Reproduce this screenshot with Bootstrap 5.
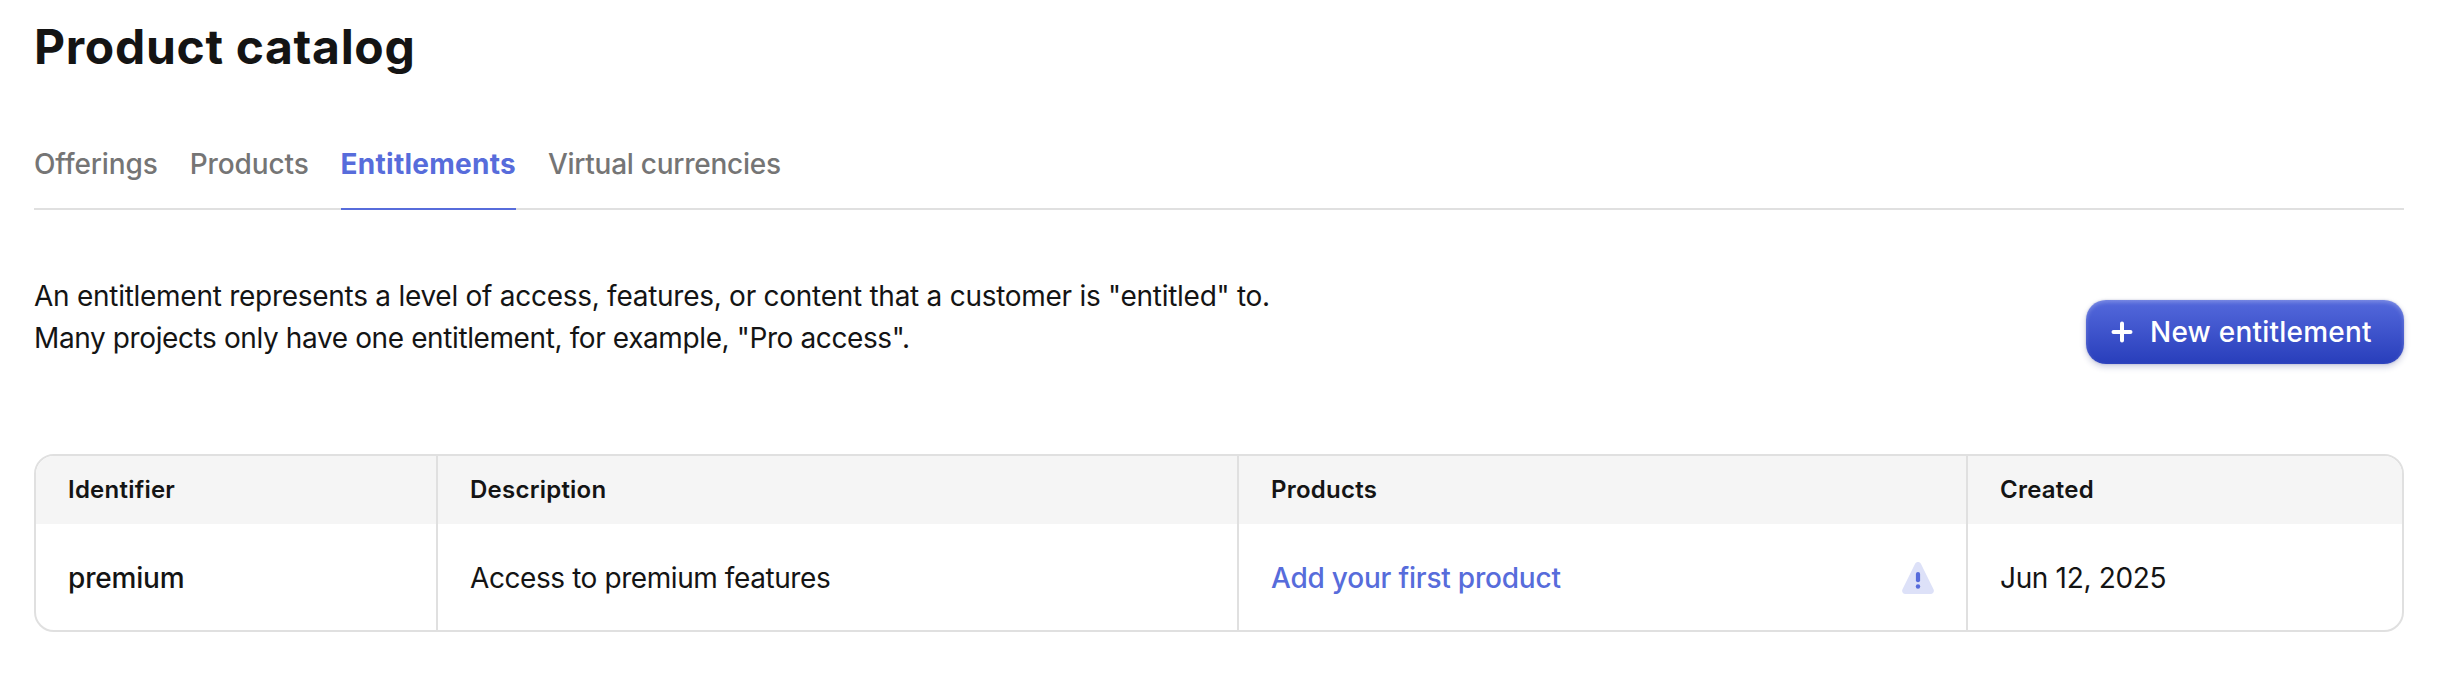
<!DOCTYPE html>
<html lang="en">
<head>
<meta charset="utf-8">
<meta name="viewport" content="width=device-width, initial-scale=1">
<title>Product catalog</title>
<link href="https://cdn.jsdelivr.net/npm/bootstrap@5.3.0/dist/css/bootstrap.min.css" rel="stylesheet">
<style>
  :root { --ink: #141414; --accent: #576cdb; --line: #e0e0e0; }
  body { font-family: Inter, "Liberation Sans", sans-serif; font-size: 28px; line-height: 42px; color: var(--ink); background: #fff; }
  .page { padding: 15px 44px 0 34px; }
  .page-title { font-size: 48px; line-height: 64px; font-weight: 700; letter-spacing: .68px; }
  .tabs { margin-top: 64px; gap: 32px; box-shadow: inset 0 -2px var(--line); }
  .tabs .nav-link { padding: 0 0 23px; line-height: 42px; color: #757575; font-weight: 500; letter-spacing: -.12px; border-bottom: 2px solid transparent; }
  .tabs .nav-link:last-child { letter-spacing: -.26px; }
  .tabs .nav-link.active { color: var(--accent); font-weight: 700; letter-spacing: .25px; border-color: var(--accent); }
  .intro { margin-top: 65px; }
  .intro p { letter-spacing: -.27px; }
  .intro .second { letter-spacing: -.39px; }
  .btn-new { margin-top: 25px; width: 318px; height: 64px; border: 0; border-radius: 20px; padding: 0 0 0 24px; gap: 16px; font-size: 28px; font-weight: 500; letter-spacing: .22px; color: #fff;
    background: linear-gradient(#5469dc, #283ebb);
    box-shadow: inset 0 2px 4px rgba(255,255,255,.25), 0 3px 6px rgba(30,40,120,.22), 0 0 2px rgba(30,40,120,.25); }
  .btn-new:hover { color: #fff; }
  .grid-frame { margin-top: 90px; border: 2px solid var(--line); border-radius: 20px; }
  .grid { table-layout: fixed; border-collapse: separate; border-spacing: 0; color: var(--ink); }
  .grid > :not(caption) > * > * { padding: 0 32px; border: 0; border-right: 2px solid var(--line); box-shadow: none; vertical-align: middle; color: var(--ink); }
  .grid > :not(caption) > * > :last-child { border-right: 0; }
  .grid th { height: 68px; font-size: 24px; font-weight: 600; line-height: 36px; letter-spacing: .24px; background: #f5f5f5; }
  .grid td { height: 106px; padding-top: 2px !important; letter-spacing: -.42px; }
  .grid td:last-child { letter-spacing: -.34px; }
  .grid td.ident { font-weight: 500; letter-spacing: -.18px; }
  .c1 { width: 402px; } .c2 { width: 801px; } .c3 { width: 729px; }
  .add-link { color: var(--accent); font-weight: 500; letter-spacing: -.21px; }
</style>
</head>
<body>
<main class="page">
  <h1 class="page-title mb-0">Product catalog</h1>

  <nav class="tabs nav">
    <a class="nav-link" href="#">Offerings</a>
    <a class="nav-link" href="#">Products</a>
    <a class="nav-link active" aria-current="page" href="#">Entitlements</a>
    <a class="nav-link" href="#">Virtual currencies</a>
  </nav>

  <section class="intro d-flex justify-content-between align-items-start">
    <p class="mb-0">An entitlement represents a level of access, features, or content that a customer is "entitled" to.<br><span class="second">Many projects only have one entitlement, for example, "Pro access".</span></p>
    <button type="button" class="btn btn-new d-flex align-items-center text-nowrap">
      <svg width="24" height="24" viewBox="0 0 24 24" fill="none" stroke="#fff" stroke-width="4" stroke-linecap="round" aria-hidden="true"><path d="M12 3.500v17M3.500 12h17"/></svg>
      <span>New entitlement</span>
    </button>
  </section>

  <div class="grid-frame overflow-hidden">
    <table class="table grid mb-0">
      <colgroup><col class="c1"><col class="c2"><col class="c3"><col></colgroup>
      <thead>
        <tr><th>Identifier</th><th>Description</th><th>Products</th><th>Created</th></tr>
      </thead>
      <tbody>
        <tr>
          <td class="ident">premium</td>
          <td>Access to premium features</td>
          <td>
            <div class="d-flex justify-content-between align-items-center">
              <a class="add-link text-decoration-none" href="#">Add your first product</a>
              <svg width="32" height="32" viewBox="0 0 32 32" aria-hidden="true">
                <path d="M13.100 1.800C14.300-.6 17.700-.6 18.900 1.800L31.500 27.200C32.600 29.400 31.200 32 28.700 32H3.300C.8 32-.6 29.400.5 27.200Z" fill="#dde1f8"/>
                <path d="M16 12v6.200" stroke="#576cdb" stroke-width="4.200" stroke-linecap="round"/>
                <circle cx="16" cy="24.500" r="2.200" fill="#576cdb"/>
              </svg>
            </div>
          </td>
          <td>Jun 12, 2025</td>
        </tr>
      </tbody>
    </table>
  </div>
</main>
<script src="https://cdn.jsdelivr.net/npm/bootstrap@5.3.0/dist/js/bootstrap.bundle.min.js"></script>
</body>
</html>
